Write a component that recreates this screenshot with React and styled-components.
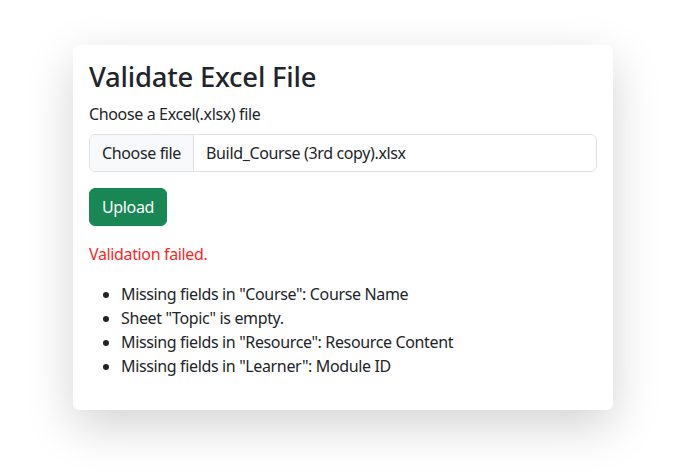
import React from "react";
import styled, { createGlobalStyle } from "styled-components";

const Global = createGlobalStyle`
  html, body { margin: 0; padding: 0; background: #fff; }
  body {
    font-family: "Noto Sans", "Open Sans", sans-serif;
    font-size: 16px;
    line-height: 1.5;
    letter-spacing: -0.36px;
    color: #212529;
  }
  * { box-sizing: border-box; }
`;

const Page = styled.div`
  min-height: 100vh;
  padding: 45px 0 0 2px;
  display: flex;
  justify-content: center;
  align-items: flex-start;
`;

const Card = styled.div`
  width: 540px;
  background: #fff;
  border-radius: 6px;
  box-shadow: 0 16px 48px rgba(0, 0, 0, 0.175);
  padding: 16px;
`;

const Title = styled.h2`
  margin: 0 0 8px;
  font-size: 27.4px;
  font-weight: 500;
  line-height: 1.2;
  letter-spacing: -0.2px;
`;

const Label = styled.label`
  display: block;
  margin-bottom: 8px;
`;

const FileInput = styled.div`
  display: flex;
  align-items: stretch;
  height: 38px;
  border: 1px solid #dee2e6;
  border-radius: 6px;
  overflow: hidden;
  margin-bottom: 16px;
`;

const FileButton = styled.span`
  display: flex;
  align-items: center;
  padding: 0 12px;
  background: #f8f9fa;
  border-right: 1px solid #dee2e6;
`;

const FileName = styled.span`
  display: flex;
  align-items: center;
  padding-left: 12px;
`;

const Button = styled.button`
  font: inherit;
  letter-spacing: inherit;
  color: #fff;
  background: #198754;
  border: 1px solid #198754;
  border-radius: 6px;
  padding: 6px 12px;
  line-height: 1.5;
  cursor: pointer;
`;

const Error = styled.p`
  color: #ff1f1f;
  margin: 16px 0 16px;
`;

const List = styled.ul`
  margin: 0 0 16px;
  padding-left: 32px;
`;

const errors = [
  'Missing fields in "Course": Course Name',
  'Sheet "Topic" is empty.',
  'Missing fields in "Resource": Resource Content',
  'Missing fields in "Learner": Module ID',
];

export default function App() {
  return (
    <>
      <Global />
      <Page>
        <Card>
          <Title>Validate Excel File</Title>
          <Label>Choose a Excel(.xlsx) file</Label>
          <FileInput>
            <FileButton>Choose file</FileButton>
            <FileName>Build_Course (3rd copy).xlsx</FileName>
          </FileInput>
          <Button>Upload</Button>
          <Error>Validation failed.</Error>
          <List>
            {errors.map((e) => (
              <li key={e}>{e}</li>
            ))}
          </List>
        </Card>
      </Page>
    </>
  );
}
